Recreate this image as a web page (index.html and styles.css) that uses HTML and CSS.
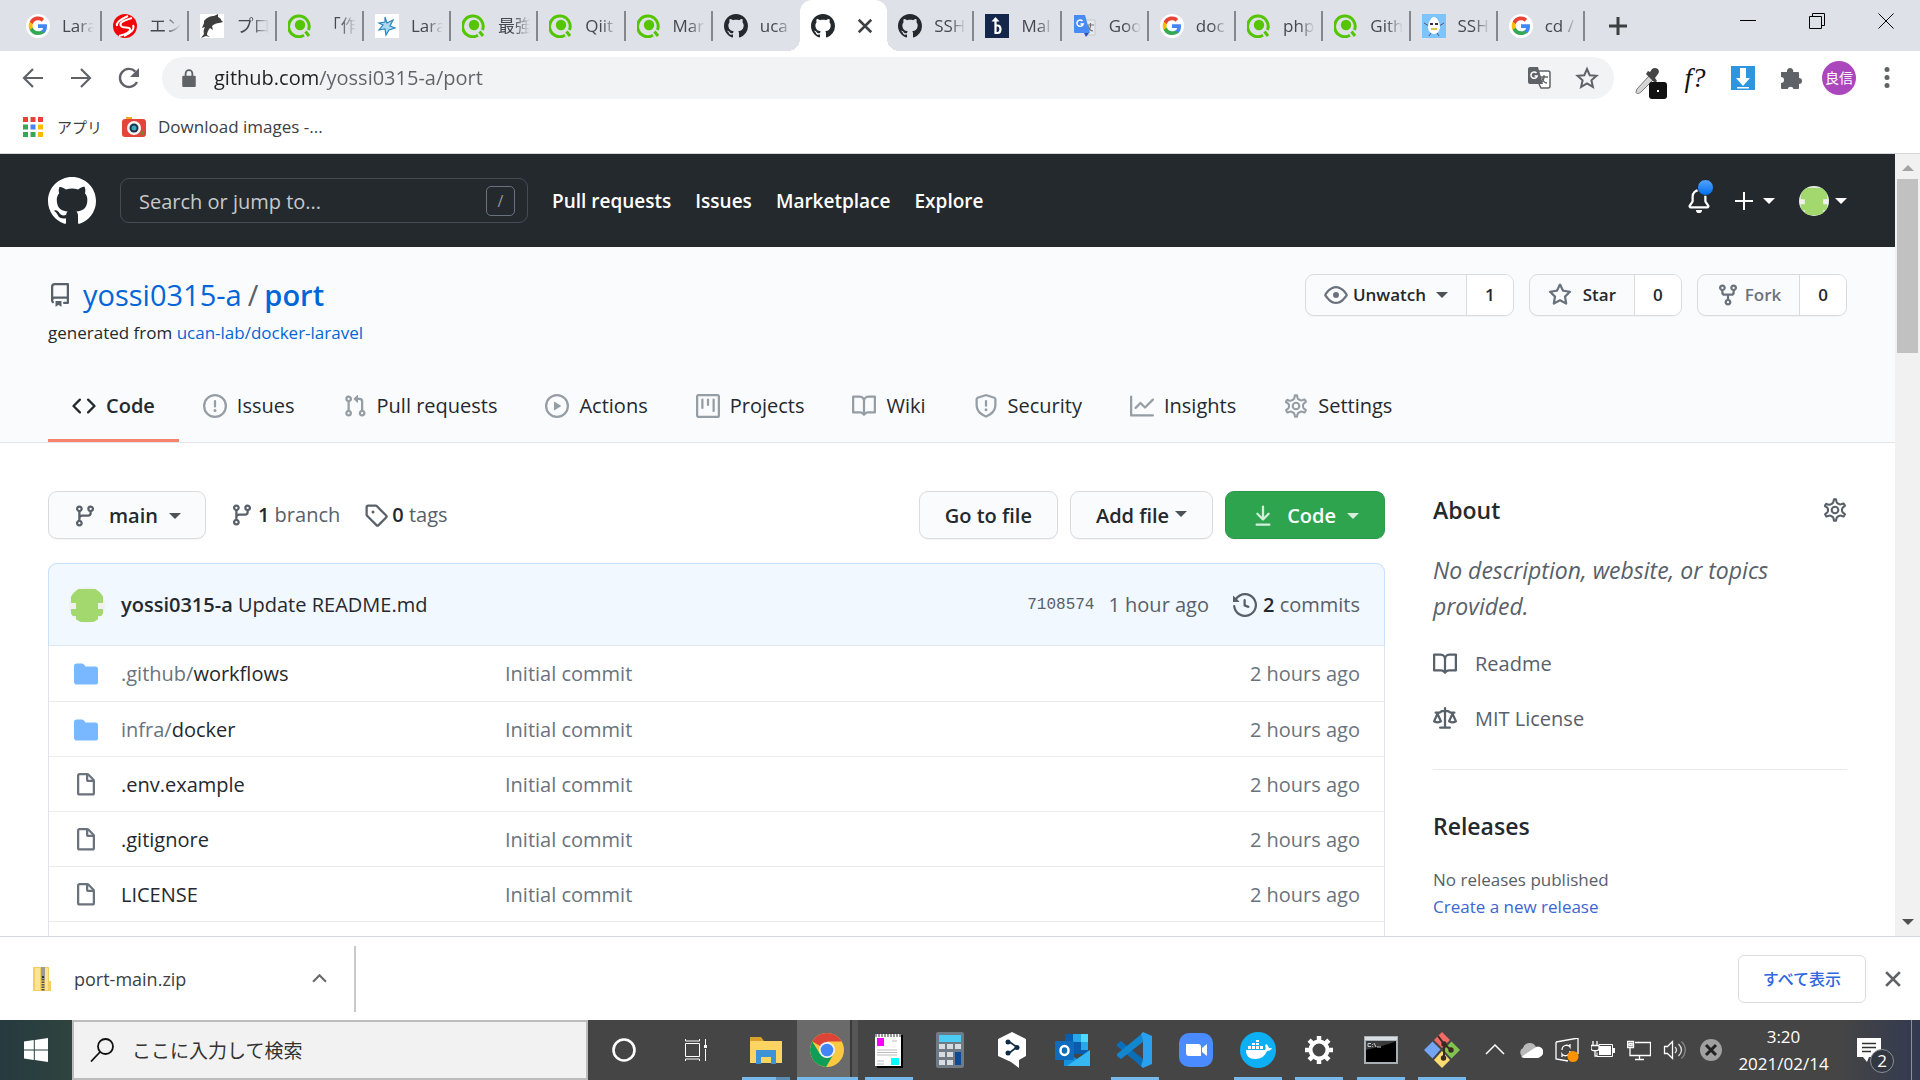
FILE: index.html
```html
<!DOCTYPE html>
<html lang="ja">
<head>
  <meta charset="UTF-8">
  <meta name="viewport" content="width=device-width, initial-scale=1">
  <title>yossi0315-a/port</title>
  <link rel="stylesheet" href="styles.css">
</head>
<body>

  <!-- ICON SPRITE -->
  <svg class="sprite" aria-hidden="true">
    <symbol id="mark" viewBox="0 0 16 16"><path d="M8 0C3.58 0 0 3.58 0 8c0 3.54 2.29 6.53 5.47 7.59.4.07.55-.17.55-.38 0-.19-.01-.82-.01-1.49-2.01.37-2.53-.49-2.69-.94-.09-.23-.48-.94-.82-1.13-.28-.15-.68-.52-.01-.53.63-.01 1.08.58 1.23.82.72 1.21 1.87.87 2.33.66.07-.52.28-.87.51-1.07-1.78-.2-3.64-.89-3.64-3.95 0-.87.31-1.59.82-2.15-.08-.2-.36-1.02.08-2.12 0 0 .67-.21 2.2.82.64-.18 1.32-.27 2-.27.68 0 1.36.09 2 .27 1.53-1.04 2.2-.82 2.2-.82.44 1.1.16 1.92.08 2.12.51.56.82 1.27.82 2.15 0 3.07-1.87 3.75-3.65 3.95.29.25.54.73.54 1.48 0 1.07-.01 1.93-.01 2.2 0 .21.15.46.55.38A8.013 8.013 0 0016 8c0-4.42-3.58-8-8-8z"/></symbol>
    <symbol id="repo" viewBox="0 0 16 16"><path d="M2 2.5A2.5 2.5 0 014.5 0h8.75a.75.75 0 01.75.75v12.5a.75.75 0 01-.75.75h-2.5a.75.75 0 110-1.5h1.75v-2h-8a1 1 0 00-.714 1.7.75.75 0 01-1.072 1.05A2.495 2.495 0 012 11.5v-9zm10.5-1V9h-8c-.356 0-.694.074-1 .208V2.5a1 1 0 011-1h8zM5 12.25v3.25a.25.25 0 00.4.2l1.45-1.087a.25.25 0 01.3 0L8.6 15.7a.25.25 0 00.4-.2v-3.25a.25.25 0 00-.25-.25h-3.5a.25.25 0 00-.25.25z"/></symbol>
    <symbol id="code" viewBox="0 0 16 16"><path d="M4.72 3.22a.75.75 0 011.06 1.06L2.06 8l3.72 3.72a.75.75 0 11-1.06 1.06L.47 8.53a.75.75 0 010-1.06l4.25-4.25zm6.56 0a.75.75 0 10-1.06 1.06L13.94 8l-3.72 3.72a.75.75 0 101.06 1.06l4.25-4.25a.75.75 0 000-1.06l-4.25-4.25z"/></symbol>
    <symbol id="issue" viewBox="0 0 16 16"><path d="M8 1.5a6.5 6.5 0 100 13 6.5 6.5 0 000-13zM0 8a8 8 0 1116 0A8 8 0 010 8zm9 3a1 1 0 11-2 0 1 1 0 012 0zm-.25-6.25a.75.75 0 00-1.5 0v3.5a.75.75 0 001.5 0v-3.5z"/></symbol>
    <symbol id="pull" viewBox="0 0 16 16"><path d="M7.177 3.073L9.573.677A.25.25 0 0110 .854v4.792a.25.25 0 01-.427.177L7.177 3.427a.25.25 0 010-.354zM3.75 2.5a.75.75 0 100 1.5.75.75 0 000-1.5zm-2.25.75a2.25 2.25 0 113 2.122v5.256a2.251 2.251 0 11-1.5 0V5.372A2.25 2.25 0 011.5 3.25zM11 2.5h-1V4h1a1 1 0 011 1v5.628a2.251 2.251 0 101.5 0V5A2.5 2.5 0 0011 2.5zm1 10.25a.75.75 0 111.5 0 .75.75 0 01-1.5 0zM3.75 12a.75.75 0 100 1.5.75.75 0 000-1.5z"/></symbol>
    <symbol id="play" viewBox="0 0 16 16"><path d="M1.5 8a6.5 6.5 0 1113 0 6.5 6.5 0 01-13 0zM8 0a8 8 0 100 16A8 8 0 008 0zM6.379 5.227A.25.25 0 006 5.442v5.117a.25.25 0 00.379.214l4.264-2.559a.25.25 0 000-.428L6.379 5.227z"/></symbol>
    <symbol id="project" viewBox="0 0 16 16"><path d="M1.75 0A1.75 1.75 0 000 1.75v12.5C0 15.216.784 16 1.75 16h12.5A1.75 1.75 0 0016 14.25V1.75A1.75 1.75 0 0014.25 0H1.75zM1.5 1.75a.25.25 0 01.25-.25h12.5a.25.25 0 01.25.25v12.5a.25.25 0 01-.25.25H1.75a.25.25 0 01-.25-.25V1.75zM11.75 3a.75.75 0 00-.75.75v7.5a.75.75 0 001.5 0v-7.5a.75.75 0 00-.75-.75zm-8.25.75a.75.75 0 011.5 0v5.5a.75.75 0 01-1.5 0v-5.5zM8 3a.75.75 0 00-.75.75v3.5a.75.75 0 001.5 0v-3.5A.75.75 0 008 3z"/></symbol>
    <symbol id="book" viewBox="0 0 16 16"><path d="M0 1.75A.75.75 0 01.75 1h4.253c1.227 0 2.317.59 3 1.501A3.744 3.744 0 0111.006 1h4.245a.75.75 0 01.75.75v10.5a.75.75 0 01-.75.75h-4.507a2.25 2.25 0 00-1.591.659l-.622.621a.75.75 0 01-1.06 0l-.622-.621A2.25 2.25 0 005.258 13H.75a.75.75 0 01-.75-.75V1.75zm8.755 3a2.25 2.25 0 012.25-2.25H14.5v9h-3.757c-.71 0-1.4.201-1.992.572l.004-7.322zm-1.504 7.324l.004-5.073-.002-2.253A2.25 2.25 0 005.003 2.5H1.5v9h3.757a3.75 3.75 0 011.994.574z"/></symbol>
    <symbol id="shield" viewBox="0 0 16 16"><path d="M7.467.133a1.75 1.75 0 011.066 0l5.25 1.68A1.75 1.75 0 0115 3.48V7c0 1.566-.32 3.182-1.303 4.682-.983 1.498-2.585 2.813-5.032 3.855a1.7 1.7 0 01-1.33 0c-2.447-1.042-4.049-2.357-5.032-3.855C1.32 10.182 1 8.566 1 7V3.48a1.75 1.75 0 011.217-1.667l5.25-1.68zm.61 1.429a.25.25 0 00-.153 0l-5.25 1.68a.25.25 0 00-.174.238V7c0 1.358.275 2.666 1.057 3.86.784 1.194 2.121 2.34 4.366 3.297a.2.2 0 00.154 0c2.245-.956 3.582-2.104 4.366-3.298C13.225 9.666 13.5 8.36 13.5 7V3.48a.25.25 0 00-.174-.237l-5.25-1.68zM9 10.5a1 1 0 11-2 0 1 1 0 012 0zm-.25-5.75a.75.75 0 10-1.5 0v3a.75.75 0 001.5 0v-3z"/></symbol>
    <symbol id="graph" viewBox="0 0 16 16"><path d="M1.5 1.75a.75.75 0 00-1.5 0v12.5c0 .414.336.75.75.75h14.5a.75.75 0 000-1.5H1.5V1.75zm14.28 2.53a.75.75 0 00-1.06-1.06L10 7.94 7.53 5.47a.75.75 0 00-1.06 0L3.22 8.72a.75.75 0 001.06 1.06L7 7.06l2.47 2.47a.75.75 0 001.06 0l5.25-5.25z"/></symbol>
    <symbol id="gear" viewBox="0 0 16 16"><g fill="none" stroke="currentColor" stroke-width="1.4"><path d="M7.429.925a6.593 6.593 0 011.142 0c.036.003.108.036.137.146l.289 1.405c.147.56.55.967.997 1.189.174.086.341.183.501.29.417.278.97.423 1.53.27l1.602-.503c.11-.03.175.016.195.046.219.31.61.941.773 1.289.014.031.022.11-.059.19l-1.315 1.106c-.411.406-.562.857-.53 1.256a4.588 4.588 0 010 .782c-.032.499.119.85.53 1.256l1.315 1.106c.08.08.073.159.059.19a6.494 6.494 0 01-.773 1.29c-.02.029-.086.074-.195.045l-1.603-.503c-.559-.153-1.112-.008-1.529.27-.16.107-.327.204-.5.29-.449.222-.851.628-.998 1.189l-.289 1.405c-.029.11-.101.143-.137.146a6.613 6.613 0 01-1.142 0c-.036-.003-.108-.037-.137-.146l-.289-1.405c-.147-.56-.55-.967-.997-1.189a4.502 4.502 0 01-.501-.29c-.417-.278-.97-.423-1.53-.27l-1.602.503c-.11.03-.175-.016-.195-.046a6.492 6.492 0 01-.773-1.289c-.014-.031-.022-.11.059-.19l1.315-1.106c.411-.406.562-.857.53-1.256a4.587 4.587 0 010-.782c.032-.499-.119-.85-.53-1.256L1.365 5.448c-.08-.08-.073-.159-.059-.19a6.44 6.44 0 01.773-1.290c.02-.029.086-.074.195-.045l1.603.503c.559.153 1.112.008 1.529-.27.16-.107.327-.204.5-.29.449-.222.851-.628.998-1.189l.388-1.606c.029-.11.101-.143.137-.146z"/><circle cx="8" cy="8" r="2.2"/></g></symbol>
    <symbol id="eye" viewBox="0 0 16 16"><path d="M1.679 7.932c.412-.621 1.242-1.75 2.366-2.717C5.175 4.242 6.527 3.5 8 3.5c1.473 0 2.824.742 3.955 1.715 1.124.967 1.954 2.096 2.366 2.717a.119.119 0 010 .136c-.412.621-1.242 1.75-2.366 2.717C10.825 11.758 9.473 12.5 8 12.5c-1.473 0-2.824-.742-3.955-1.715C2.92 9.818 2.09 8.69 1.679 8.068a.119.119 0 010-.136zM8 2c-1.981 0-3.67.992-4.933 2.078C1.797 5.169.88 6.423.43 7.1a1.619 1.619 0 000 1.798c.45.678 1.367 1.932 2.637 3.024C4.329 13.008 6.019 14 8 14c1.981 0 3.67-.992 4.933-2.078 1.27-1.091 2.187-2.345 2.637-3.023a1.619 1.619 0 000-1.798c-.45-.678-1.367-1.932-2.637-3.023C11.671 2.992 9.981 2 8 2zm0 8a2 2 0 100-4 2 2 0 000 4z"/></symbol>
    <symbol id="star" viewBox="0 0 16 16"><path d="M8 .25a.75.75 0 01.673.418l1.882 3.815 4.21.612a.75.75 0 01.416 1.279l-3.046 2.97.719 4.192a.75.75 0 01-1.088.791L8 12.347l-3.766 1.98a.75.75 0 01-1.088-.79l.72-4.194L.818 6.374a.75.75 0 01.416-1.28l4.21-.611L7.327.668A.75.75 0 018 .25zm0 2.445L6.615 5.5a.75.75 0 01-.564.41l-3.097.45 2.24 2.184a.75.75 0 01.216.664l-.528 3.084 2.769-1.456a.75.75 0 01.698 0l2.77 1.456-.53-3.084a.75.75 0 01.216-.664l2.24-2.183-3.096-.45a.75.75 0 01-.564-.41L8 2.694v.001z"/></symbol>
    <symbol id="fork" viewBox="0 0 16 16"><path d="M5 3.25a.75.75 0 11-1.5 0 .75.75 0 011.5 0zm0 2.122a2.25 2.25 0 10-1.5 0v.878A2.25 2.25 0 005.75 8.5h1.5v2.128a2.251 2.251 0 101.5 0V8.5h1.5a2.25 2.25 0 002.25-2.25v-.878a2.25 2.25 0 10-1.5 0v.878a.75.75 0 01-.75.75h-4.5A.75.75 0 015 6.25v-.878zm3.75 7.378a.75.75 0 11-1.5 0 .75.75 0 011.5 0zm3-8.75a.75.75 0 100-1.5.75.75 0 000 1.5z"/></symbol>
    <symbol id="branch" viewBox="0 0 16 16"><path d="M11.75 2.5a.75.75 0 100 1.5.75.75 0 000-1.5zm-2.25.75a2.25 2.25 0 113 2.122V6A2.5 2.5 0 0110 8.5H6a1 1 0 00-1 1v1.128a2.251 2.251 0 11-1.5 0V5.372a2.25 2.25 0 111.5 0v1.836A2.492 2.492 0 016 7h4a1 1 0 001-1v-.628A2.25 2.25 0 019.5 3.25zM4.25 12a.75.75 0 100 1.5.75.75 0 000-1.5zM3.5 3.25a.75.75 0 111.5 0 .75.75 0 01-1.5 0z"/></symbol>
    <symbol id="tag" viewBox="0 0 16 16"><path d="M2.5 7.775V2.75a.25.25 0 01.25-.25h5.025a.25.25 0 01.177.073l6.25 6.25a.25.25 0 010 .354l-5.025 5.025a.25.25 0 01-.354 0l-6.25-6.25a.25.25 0 01-.073-.177zm-1.5 0V2.75C1 1.784 1.784 1 2.75 1h5.025c.464 0 .91.184 1.238.513l6.25 6.25a1.75 1.75 0 010 2.474l-5.026 5.026a1.75 1.75 0 01-2.474 0l-6.25-6.25A1.75 1.75 0 011 7.775zM6 5a1 1 0 100 2 1 1 0 000-2z"/></symbol>
    <symbol id="history" viewBox="0 0 16 16"><path d="M1.643 3.143L.427 1.927A.25.25 0 000 2.104V5.75c0 .138.112.25.25.25h3.646a.25.25 0 00.177-.427L2.715 4.215a6.5 6.5 0 11-1.18 4.458.75.75 0 10-1.493.154 8.001 8.001 0 101.6-5.684zM7.75 4a.75.75 0 01.75.75v2.992l2.028.812a.75.75 0 01-.557 1.392l-2.5-1A.75.75 0 017 8.25v-3.5A.75.75 0 017.75 4z"/></symbol>
    <symbol id="file" viewBox="0 0 16 16"><path d="M3.75 1.5a.25.25 0 00-.25.25v11.5c0 .138.112.25.25.25h8.5a.25.25 0 00.25-.25V6H9.75A1.75 1.75 0 018 4.25V1.5H3.75zm5.75.56v2.19c0 .138.112.25.25.25h2.19L9.5 2.06zM2 1.75C2 .784 2.784 0 3.75 0h5.086c.464 0 .909.184 1.237.513l3.414 3.414c.329.328.513.773.513 1.237v8.086A1.75 1.75 0 0112.25 15h-8.5A1.75 1.75 0 012 13.25V1.75z"/></symbol>
    <symbol id="folder" viewBox="0 0 16 16"><path d="M1.75 1A1.75 1.75 0 000 2.75v10.5C0 14.216.784 15 1.75 15h12.5A1.75 1.75 0 0016 13.25v-8.5A1.75 1.75 0 0014.25 3h-6.5a.25.25 0 01-.2-.1l-.9-1.2c-.33-.44-.85-.7-1.4-.7h-3.5z"/></symbol>
    <symbol id="download" viewBox="0 0 16 16"><path d="M7.47 10.78a.75.75 0 001.06 0l3.75-3.75a.75.75 0 00-1.06-1.06L8.75 8.44V1.75a.75.75 0 00-1.5 0v6.69L4.78 5.97a.75.75 0 00-1.06 1.06l3.75 3.75zM3.75 13a.75.75 0 000 1.5h8.5a.75.75 0 000-1.5h-8.5z"/></symbol>
    <symbol id="law" viewBox="0 0 16 16"><path d="M8.75.75a.75.75 0 00-1.5 0V2h-.984c-.305 0-.604.08-.869.23l-1.288.737A.25.25 0 013.984 3H1.75a.75.75 0 000 1.5h.428L.066 9.192a.75.75 0 00.154.838c.2.2.5.37.754.512A4.492 4.492 0 003 11c.88 0 1.556-.22 2.023-.454.3-.15.55-.3.757-.516a.75.75 0 00.154-.838L3.822 4.5h.162c.305 0 .604-.08.869-.23l1.289-.737a.25.25 0 01.124-.033h.984V13h-2.5a.75.75 0 000 1.5h6.5a.75.75 0 000-1.5h-2.5V3.5h.984a.25.25 0 01.124.033l1.29.736c.264.152.563.231.868.231h.162l-2.112 4.692a.75.75 0 00.154.838c.2.2.5.37.754.512A4.492 4.492 0 0013 11c.88 0 1.556-.22 2.023-.454.3-.15.55-.3.757-.516a.75.75 0 00.154-.838L13.823 4.5h.427a.75.75 0 000-1.5h-2.234a.25.25 0 01-.124-.033l-1.29-.736A1.75 1.75 0 009.735 2H8.75V.75zM1.695 9.227c.285.135.718.273 1.305.273s1.02-.138 1.305-.273L3 6.327l-1.305 2.9zm10 0c.285.135.718.273 1.305.273s1.02-.138 1.305-.273L13 6.327l-1.305 2.9z"/></symbol>
    <symbol id="bell" viewBox="0 0 16 16"><path d="M8 16a2 2 0 001.985-1.75c.017-.137-.097-.25-.235-.25h-3.5c-.138 0-.252.113-.235.25A2 2 0 008 16zM8 1.5A3.5 3.5 0 004.5 5v2.947c0 .346-.102.683-.294.97L2.5 11.48l.02.02h10.96l.02-.02-1.706-2.563a1.75 1.75 0 01-.294-.97V5A3.5 3.5 0 008 1.5zM3 5a5 5 0 0110 0v2.947c0 .05.015.098.042.139l1.703 2.555A1.518 1.518 0 0113.482 13H2.518a1.518 1.518 0 01-1.263-2.36l1.703-2.554A.25.25 0 003 7.947V5z"/></symbol>
    <symbol id="close" viewBox="0 0 16 16"><path d="M3 3l10 10M13 3L3 13" fill="none" stroke="currentColor" stroke-width="2"/></symbol>
    <symbol id="identicon" viewBox="0 0 36 36"><path fill="#f0f0f0" d="M0 0h36v36H0z"/><path fill="#a3d86f" d="M2 2h32v14h-5v6h5v7h-5v6H7v-6H2v-7h5v-6H2z"/></symbol>

    <!-- favicons -->
    <symbol id="fav-google" viewBox="0 0 24 24"><circle cx="12" cy="12" r="12" fill="#fff"/><path fill="#4285f4" d="M21 12.200c0-.700-.100-1.300-.200-1.900H12v3.600h5.100a4.400 4.400 0 01-1.900 2.900v2.400h3.100c1.800-1.700 2.700-4.100 2.700-7z"/><path fill="#34a853" d="M12 21c2.500 0 4.600-.8 6.200-2.200l-3-2.400c-.8.6-1.900.9-3.200.9-2.400 0-4.500-1.600-5.200-3.800H3.700v2.400A9 9 0 0012 21z"/><path fill="#fbbc05" d="M6.800 13.500a5.400 5.400 0 010-3.400V7.700H3.700a9.300 9.300 0 000 8.200z"/><path fill="#ea4335" d="M12 6.300c1.400 0 2.600.5 3.500 1.400L18.200 5A9 9 0 003.700 7.700l3.100 2.400A5.400 5.400 0 0112 6.300z"/></symbol>
    <symbol id="fav-qiita" viewBox="0 0 24 24"><path d="M20.500 16A10.300 10.300 0 1 0 16 21.300M17.500 17.500L21 22" fill="none" stroke="#55c500" stroke-width="3"/><circle cx="12" cy="11" r="5.200" fill="#55c500"/></symbol>
    <symbol id="fav-red" viewBox="0 0 24 24"><circle cx="12" cy="12" r="12" fill="#f00606"/><path d="M19 4C9 7 6 9 8 12s8 0 9 3-4 5-11 7M15 2C6 6 3 9 4 12M20 11c2 4-2 8-9 11" fill="none" stroke="#fff" stroke-width="2"/></symbol>
    <symbol id="fav-dolphin" viewBox="0 0 24 24"><path fill="#fff" d="M0 0h24v24H0z"/><path fill="#3d3d3d" d="M4 7C7 3 11 2 14 2l4-2v3c2 1 3 2 3 3l2 2-4 1c-2 0-5 1-7 3l1 4-3-2c-2 2-3 5-3 7l3 2-4-1-5 2 3-4c-1-3 0-5 1-7l-3 1 2-5z"/></symbol>
    <symbol id="fav-blue" viewBox="0 0 24 24"><path fill="#fff" d="M0 0h24v24H0z"/><path d="M10 3l2 6 6-3-3 6 5 2-6 2-3 5-1-6-6 1 4-5-4-2 6-1z" fill="#a9d8f0" stroke="#2b86bb" stroke-width="1.200"/></symbol>
    <symbol id="fav-b" viewBox="0 0 24 24"><path fill="#15264b" d="M0 0h24v24H0z"/><path d="M10.500 5v14h2c4 0 4-7.500 0-7.500h-2" fill="none" stroke="#fff" stroke-width="2.200"/><path fill="#fff" d="M10.500 3l4 4.500h-8z"/></symbol>
    <symbol id="fav-egg" viewBox="0 0 24 24"><path fill="#7cc4fb" d="M0 0h24v24H0z"/><path d="M7 12L2 9M17 12l5-3M9 19l-2 3M15 19l2 3" stroke="#557" fill="none"/><path fill="#fff" d="M12 3c3 0 6 6 6 10s-3 7-6 7-6-3-6-7 3-10 6-10z"/><path fill="#334" d="M8 9h3v2H8zM13 9h3v2h-3z"/><path fill="#d9c94a" d="M9 14h6v2H9z"/></symbol>
    <symbol id="fav-trans" viewBox="0 0 24 24"><path fill="#e8eaed" stroke="#c6c9cd" d="M10 6h12v15H13z"/><path d="M14 11h7M17.500 9v2c0 3-1 5-3 6M15 12c1 3 3 5 5 5" stroke="#70757a" stroke-width="1.200" fill="none"/><path fill="#4a8cf5" d="M1 1h11l5 18H2a1 1 0 01-1-1z"/><path fill="#2b50b8" d="M11 19h5l-3 4z"/><path d="M9.500 7A3.200 3.200 0 1 0 10.200 10H7.500" fill="none" stroke="#fff" stroke-width="1.500"/></symbol>
  </svg>

  <!-- BROWSER TABS -->
  <div class="tab-strip">
    <div class="tabs">
      <button class="tab"><svg><use href="#fav-google"/></svg><span>Lara</span></button>
      <button class="tab"><svg><use href="#fav-red"/></svg><span>エン</span></button>
      <button class="tab"><svg><use href="#fav-dolphin"/></svg><span>プロ</span></button>
      <button class="tab"><svg><use href="#fav-qiita"/></svg><span>「作</span></button>
      <button class="tab"><svg><use href="#fav-blue"/></svg><span>Lara</span></button>
      <button class="tab"><svg><use href="#fav-qiita"/></svg><span>最強</span></button>
      <button class="tab"><svg><use href="#fav-qiita"/></svg><span>Qiit</span></button>
      <button class="tab"><svg><use href="#fav-qiita"/></svg><span>Mar</span></button>
      <button class="tab no-line"><svg class="dark"><use href="#mark"/></svg><span>uca</span></button>
      <button class="tab active"><svg class="dark"><use href="#mark"/></svg><svg class="tab-close"><use href="#close"/></svg></button>
      <button class="tab"><svg class="dark"><use href="#mark"/></svg><span>SSH</span></button>
      <button class="tab"><svg><use href="#fav-b"/></svg><span>Mal</span></button>
      <button class="tab"><svg><use href="#fav-trans"/></svg><span>Goo</span></button>
      <button class="tab"><svg><use href="#fav-google"/></svg><span>doc</span></button>
      <button class="tab"><svg><use href="#fav-qiita"/></svg><span>php</span></button>
      <button class="tab"><svg><use href="#fav-qiita"/></svg><span>Gith</span></button>
      <button class="tab"><svg><use href="#fav-egg"/></svg><span>SSH</span></button>
      <button class="tab"><svg><use href="#fav-google"/></svg><span>cd /</span></button>
    </div>
    <button class="new-tab" aria-label="New tab"><svg viewBox="0 0 18 18"><path d="M9 0v18M0 9h18" stroke="#3c4043" stroke-width="3"/></svg></button>
    <div class="window-buttons">
      <button aria-label="Minimize"><svg viewBox="0 0 16 16"><path d="M0 7.500h16" stroke="#000"/></svg></button>
      <button aria-label="Restore"><svg viewBox="0 0 16 16"><path d="M.5 3.500h12v12H.5zM3.500 3.500v-3h12v12h-3" fill="none" stroke="#000"/></svg></button>
      <button aria-label="Close"><svg viewBox="0 0 16 16"><path d="M.5.5l15 15M15.500.5l-15 15" stroke="#000"/></svg></button>
    </div>
  </div>

  <!-- ADDRESS BAR -->
  <div class="toolbar">
    <button class="tool" aria-label="Back"><svg viewBox="0 0 24 24"><path d="M22 12H3M12 3l-9 9 9 9" fill="none" stroke="#5f6368" stroke-width="2.200"/></svg></button>
    <button class="tool" aria-label="Forward"><svg viewBox="0 0 24 24"><path d="M2 12h19M12 3l9 9-9 9" fill="none" stroke="#5f6368" stroke-width="2.200"/></svg></button>
    <button class="tool" aria-label="Reload"><svg viewBox="0 0 24 24"><path d="M20 16a9 9 0 11-1.600-10.400" fill="none" stroke="#5f6368" stroke-width="2.400"/><path d="M22 2v9h-9z" fill="#5f6368"/></svg></button>
    <div class="omnibox">
      <svg class="lock" viewBox="0 0 12 16"><path d="M1 6h10a1 1 0 011 1v8a1 1 0 01-1 1H1a1 1 0 01-1-1V7a1 1 0 011-1z" fill="#5f6368"/><path d="M3 7V4a3 3 0 016 0v3" fill="none" stroke="#5f6368" stroke-width="1.600"/></svg>
      <input class="url" type="text" value="github.com/yossi0315-a/port" aria-label="Address">
      <button aria-label="Translate"><svg viewBox="0 0 24 24"><path d="M12 5h9a2 2 0 012 2v13a2 2 0 01-2 2h-7l-2-4" fill="#fff" stroke="#5f6368" stroke-width="1.500"/><path d="M13 11h8M17 9v2c0 3-2 5-4 6M15 12c1 3 3 5 5 5" fill="none" stroke="#5f6368" stroke-width="1.300"/><path d="M3 1h8l5 17H3a2 2 0 01-2-2V3a2 2 0 012-2z" fill="#5f6368"/><path d="M9.500 7A3.200 3.200 0 1 0 10.200 10H7.500" fill="none" stroke="#fff" stroke-width="1.500"/></svg></button>
      <button aria-label="Bookmark"><svg viewBox="0 0 24 24"><path d="M12 3l2.700 6.200 6.800.6-5.100 4.500 1.500 6.600-5.900-3.500-5.900 3.500 1.500-6.600-5.100-4.500 6.800-.6z" fill="none" stroke="#5f6368" stroke-width="2"/></svg></button>
    </div>
    <div class="extensions">
      <button class="picker" aria-label="Color picker"><svg viewBox="0 0 32 34"><path d="M2 24l12-13 4 4L6 27c-2 2-5 2-5 0z" fill="#d5d5d5" stroke="#777"/><path d="M11 9l9 9 2-2-2-3 3-4c3-4-2-8-6-5l-2 3-2-1z" fill="#444"/><rect x="14" y="17" width="18" height="17" rx="3" fill="#111"/><path fill="#fff" d="M22 25h2v2h-2z"/></svg></button>
      <button class="font-ext" aria-label="Fonts"><i>f?</i></button>
      <button aria-label="Downloader"><svg viewBox="0 0 24 24"><path fill="#2e95df" d="M0 0h24v24H0z"/><path fill="#fff" d="M9 2h6v10h4l-7 8-7-8h4zM6 21h12v1.500H6z"/></svg></button>
      <button aria-label="Extensions"><svg viewBox="0 0 24 24"><path fill="#5f6368" d="M2 6h6a3.200 3.200 0 116.200 0H19a1 1 0 011 1v5a3 3 0 110 6v4a1 1 0 01-1 1h-4.500a3 3 0 00-5.800 0H3a1 1 0 01-1-1v-5a3 3 0 000-6z"/></svg></button>
      <button class="profile">良信</button>
      <button aria-label="Menu"><svg viewBox="0 0 24 24"><g fill="#5f6368"><circle cx="12" cy="3.500" r="2.500"/><circle cx="12" cy="11.500" r="2.500"/><circle cx="12" cy="19.500" r="2.500"/></g></svg></button>
    </div>
  </div>

  <!-- BOOKMARKS -->
  <nav class="bookmarks">
    <a href="#" class="apps-link"><svg viewBox="0 0 20 20"><g fill="#ea4335"><path d="M0 0h5v5H0zM7.500 0h5v5h-5zM15 0h5v5h-5z"/></g><path fill="#34a853" d="M0 7.500h5v5H0zM0 15h5v5H0zM7.500 15h5v5h-5z"/><path fill="#4285f4" d="M7.500 7.500h5v5h-5z"/><path fill="#fbbc05" d="M15 7.500h5v5h-5zM15 15h5v5h-5z"/></svg>アプリ</a>
    <a href="#"><svg class="camera" viewBox="0 0 24 20"><rect x="4" width="6" height="5" fill="#f5a623"/><rect y="2" width="24" height="18" rx="3" fill="#e4443c"/><circle cx="12" cy="11" r="7" fill="#f5f5f5"/><circle cx="12" cy="11" r="4.500" fill="#1c3444"/><circle cx="12" cy="11" r="2.500" fill="#3ba7c4"/><circle cx="20.500" cy="16" r="2" fill="#6a8a2c"/></svg>Download images -...</a>
  </nav>

  <!-- PAGE -->
  <div class="viewport">
    <div class="page">
      <header class="gh-header">
        <a href="#" aria-label="Homepage"><svg class="gh-logo"><use href="#mark"/></svg></a>
        <div class="gh-search">
          <input type="text" placeholder="Search or jump to..." aria-label="Search or jump to">
          <kbd>/</kbd>
        </div>
        <nav>
          <a href="#">Pull requests</a>
          <a href="#">Issues</a>
          <a href="#">Marketplace</a>
          <a href="#">Explore</a>
        </nav>
        <div class="gh-user">
          <button class="notify" aria-label="Notifications"><svg class="icon"><use href="#bell"/></svg><span class="dot"></span></button>
          <button aria-label="Create new"><svg class="plus" viewBox="0 0 18 18"><path d="M9 0v18M0 9h18" stroke="#fff" stroke-width="2"/></svg><span class="caret"></span></button>
          <button aria-label="Account"><svg class="avatar"><use href="#identicon"/></svg><span class="caret"></span></button>
        </div>
      </header>

      <div class="repo-head">
        <div class="repo-top">
          <div>
            <h1><svg class="icon"><use href="#repo"/></svg><a href="#">yossi0315-a</a><span>/</span><a href="#"><strong>port</strong></a></h1>
            <p>generated from <a href="#">ucan-lab/docker-laravel</a></p>
          </div>
          <div class="repo-actions">
            <div class="count-btn"><button><svg class="icon"><use href="#eye"/></svg>Unwatch<span class="caret"></span></button><a href="#">1</a></div>
            <div class="count-btn"><button class="spaced"><svg class="icon"><use href="#star"/></svg>Star</button><a href="#">0</a></div>
            <div class="count-btn"><button class="muted" disabled><svg class="icon"><use href="#fork"/></svg>Fork</button><a href="#">0</a></div>
          </div>
        </div>
        <nav class="repo-nav">
          <a href="#" class="selected"><svg class="icon"><use href="#code"/></svg>Code</a>
          <a href="#"><svg class="icon"><use href="#issue"/></svg>Issues</a>
          <a href="#"><svg class="icon"><use href="#pull"/></svg>Pull requests</a>
          <a href="#"><svg class="icon"><use href="#play"/></svg>Actions</a>
          <a href="#"><svg class="icon"><use href="#project"/></svg>Projects</a>
          <a href="#"><svg class="icon"><use href="#book"/></svg>Wiki</a>
          <a href="#"><svg class="icon"><use href="#shield"/></svg>Security</a>
          <a href="#"><svg class="icon"><use href="#graph"/></svg>Insights</a>
          <a href="#"><svg class="icon"><use href="#gear"/></svg>Settings</a>
        </nav>
      </div>

      <main class="repo-body">
        <section>
          <div class="file-nav">
            <button class="btn branch-btn"><svg class="icon"><use href="#branch"/></svg>main<span class="caret"></span></button>
            <a href="#"><svg class="icon"><use href="#branch"/></svg><span><strong>1</strong> branch</span></a>
            <a href="#"><svg class="icon"><use href="#tag"/></svg><span><strong>0</strong> tags</span></a>
            <div class="file-buttons">
              <button class="btn">Go to file</button>
              <button class="btn">Add file<span class="caret raised"></span></button>
              <button class="btn primary"><svg class="icon"><use href="#download"/></svg>Code<span class="caret"></span></button>
            </div>
          </div>

          <div class="files">
            <div class="last-commit">
              <svg class="commit-avatar"><use href="#identicon"/></svg>
              <p><a href="#"><strong>yossi0315-a</strong></a> <a href="#">Update README.md</a></p>
              <a href="#" class="sha">7108574</a>
              <span class="when">1 hour ago</span>
              <a href="#" class="commits"><svg class="icon"><use href="#history"/></svg><span><strong>2</strong> commits</span></a>
            </div>
            <table>
              <colgroup><col class="c-icon"><col class="c-name"><col><col class="c-age"></colgroup>
              <tr><td><svg class="icon folder"><use href="#folder"/></svg></td><td><a href="#"><span>.github/</span>workflows</a></td><td>Initial commit</td><td>2 hours ago</td></tr>
              <tr><td><svg class="icon folder"><use href="#folder"/></svg></td><td><a href="#"><span>infra/</span>docker</a></td><td>Initial commit</td><td>2 hours ago</td></tr>
              <tr><td><svg class="icon"><use href="#file"/></svg></td><td><a href="#">.env.example</a></td><td>Initial commit</td><td>2 hours ago</td></tr>
              <tr><td><svg class="icon"><use href="#file"/></svg></td><td><a href="#">.gitignore</a></td><td>Initial commit</td><td>2 hours ago</td></tr>
              <tr><td><svg class="icon"><use href="#file"/></svg></td><td><a href="#">LICENSE</a></td><td>Initial commit</td><td>2 hours ago</td></tr>
              <tr><td></td><td></td><td></td><td></td></tr>
            </table>
          </div>
        </section>

        <aside>
          <div class="about">
            <div class="about-head"><h2>About</h2><button aria-label="Edit"><svg class="icon"><use href="#gear"/></svg></button></div>
            <p><em>No description, website, or topics provided.</em></p>
            <a href="#"><svg class="icon"><use href="#book"/></svg>Readme</a>
            <a href="#"><svg class="icon"><use href="#law"/></svg>MIT License</a>
          </div>
          <div class="releases">
            <h2>Releases</h2>
            <p>No releases published</p>
            <a href="#">Create a new release</a>
          </div>
        </aside>
      </main>
    </div>
    <div class="scrollbar"><span class="up"></span><span class="thumb"></span><span class="down"></span></div>
  </div>

  <!-- DOWNLOAD SHELF -->
  <div class="shelf">
    <button class="download-item">
      <svg class="zip" viewBox="0 0 18 24"><path fill="#f3cf62" d="M0 0h16v14h2v10H0z"/><path fill="#fbe49a" d="M2 1h5v22H2zM12 1h3v22h-3z"/><path fill="#9a9a9a" d="M8 0h4v12H8z"/><path d="M10 12v12" stroke="#555" stroke-width="3" stroke-dasharray="1.500 1"/><path fill="#333" d="M9 9h2v2H9z"/></svg>
      <span>port-main.zip</span>
      <svg class="chev" viewBox="0 0 14 8"><path d="M1 7l6-6 6 6" fill="none" stroke="#6a6a6a" stroke-width="2"/></svg>
    </button>
    <button class="show-all">すべて表示</button>
    <button class="shelf-close" aria-label="Close"><svg><use href="#close"/></svg></button>
  </div>

  <!-- TASKBAR -->
  <div class="taskbar">
    <button class="start" aria-label="Start"><svg viewBox="0 0 24 24"><path fill="#fff" d="M0 3.400L9.800 2v9.500H0zM10.800 1.900L24 0v11.500H10.800zM0 12.500h9.800V22L0 20.600zM10.800 12.500H24V24l-13.200-1.900z"/></svg></button>
    <label class="task-search">
      <svg viewBox="0 0 24 24"><circle cx="15.500" cy="8.500" r="7.500" fill="none" stroke="#111" stroke-width="1.800"/><path d="M10 14L1 23.500" stroke="#111" stroke-width="1.800"/></svg>
      <input type="text" placeholder="ここに入力して検索">
    </label>
    <button class="task-btn" aria-label="Cortana"><svg viewBox="0 0 24 24"><circle cx="12" cy="12" r="10.500" fill="none" stroke="#fff" stroke-width="2.600"/></svg></button>
    <button class="task-btn" aria-label="Task view"><svg viewBox="0 0 24 24"><path d="M1.500 5.500h14v13h-14zM1.500 1v2h14V1M1.500 23v-2h14v2M21.500 1v6M21.500 11v12" fill="none" stroke="#fff"/><path fill="#fff" d="M20 7h3v3h-3z"/></svg></button>
    <div class="apps">
      <button class="running split" aria-label="Explorer"><svg viewBox="0 0 36 36"><path fill="#dba22b" d="M2 5h11l3 4H2z"/><path fill="#fcd462" d="M2 9h32v22H2z"/><path fill="#3e92d6" d="M8 18h20v14h-5v-7H13v7H8z"/></svg></button>
      <button class="current" aria-label="Chrome"><svg viewBox="0 0 36 36"><circle cx="18" cy="18" r="17" fill="#fbc940"/><path fill="#db4437" d="M18 18L3.300 9.500A17 17 0 0132.700 9.500H18z"/><path fill="#0f9d58" d="M3.300 9.500A17 17 0 0017 35l8-13.500L18 18l-7 4z"/><circle cx="18" cy="18" r="8" fill="#f1f1f1"/><circle cx="18" cy="18" r="6.300" fill="#4285f4"/></svg></button>
      <button class="running" aria-label="Notes"><svg viewBox="0 0 36 36"><path fill="#000" d="M6 3h26v33H6z"/><path fill="#fff" d="M4 2h26v32H4z"/><path d="M5 1v4M8 1v4M11 1v4M14 1v4M17 1v4M20 1v4M23 1v4M26 1v4M29 1v4" stroke="#333"/><path fill="#f0f" d="M6 6h7v8H6z"/><path fill="#0ff" d="M20 26h8v7h-8z"/><path d="M6 18h20M6 20.500h20M6 23h20M6 29h7M6 32h7M21 9h5" stroke="#bbb"/></svg></button>
      <button aria-label="Calculator"><svg viewBox="0 0 36 36"><rect x="4" y="0" width="28" height="36" rx="2" fill="#6f7a85"/><path fill="#4ccbf5" d="M7 3h22v7H7z"/><path fill="#d8dce0" d="M7 12h6v5H7zM15 12h6v5h-6zM23 12h6v5h-6zM7 20h6v5H7zM15 20h6v5h-6zM7 28h6v5H7zM15 28h6v5h-6z"/><path fill="#0f4a96" d="M23 20h6v13h-6z"/></svg></button>
      <button aria-label="DeepL"><svg viewBox="0 0 36 36"><path fill="#fff" d="M18 0l14 7v17l-7 4v8l-8-6L4 24V7z"/><path d="M14 9l9 6-9 7" fill="none" stroke="#0f2b46" stroke-width="1.600"/><g fill="#0f2b46"><circle cx="14" cy="10" r="2.500"/><circle cx="23" cy="15.500" r="2.500"/><circle cx="14" cy="21" r="2.500"/></g></svg></button>
      <button aria-label="Outlook"><svg viewBox="0 0 36 36"><path fill="#0a5cad" d="M10 2h23v20H10z"/><path fill="#28a8ea" d="M18 2h8v8h-8zM26 10h7v8h-7z"/><path fill="#50d9ff" d="M26 2h7v8h-7z"/><path fill="#1490df" d="M9 18l13 9 13-9v16H9z"/><path fill="#35b8f1" d="M35 18L12 34h23z"/><rect y="9" width="19" height="19" rx="1" fill="#0f6cbd"/><ellipse cx="9.500" cy="18.500" rx="4" ry="4.500" fill="none" stroke="#fff" stroke-width="2.500"/></svg></button>
      <button class="running" aria-label="Editor"><svg viewBox="0 0 36 36"><path fill="#0a6fb8" d="M0 12l4-3 22 18v9L0 14z"/><path fill="#1386d0" d="M0 24l4 3L27 9V0L0 22z"/><path fill="#2aa0ee" d="M26 0l9 4v28l-9 4-2-2 2-6V8l-2-6z"/></svg></button>
      <button aria-label="Zoom"><svg viewBox="0 0 36 36"><rect x="1" y="1" width="34" height="34" rx="10" fill="#4a8cff"/><path fill="#fff" d="M8 12h12a3 3 0 013 3v9H11a3 3 0 01-3-3zM24 16l5-4v12l-5-4z"/></svg></button>
      <button class="running" aria-label="Docker"><svg viewBox="0 0 36 36"><circle cx="18" cy="18" r="18" fill="#0db0f5"/><path fill="#fff" d="M6 18h19c1-2 1-3 0-4l1-2c2 1 2 2 3 4h3c-1 2-2 3-5 3-2 5-6 8-12 8-6 0-9-3-9-9z"/><path fill="#fff" d="M8 14h3v3H8zM12 14h3v3h-3zM16 14h3v3h-3zM20 14h3v3h-3zM12 11h3v2h-3zM16 11h3v2h-3zM16 8h3v2h-3z"/></svg></button>
      <button class="running" aria-label="Settings"><svg viewBox="0 0 36 36"><circle cx="18" cy="18" r="8.500" fill="none" stroke="#fff" stroke-width="4"/><path d="M18 4v5M18 27v5M4 18h5M27 18h5M8.100 8.100l3.600 3.600M24.300 24.300l3.600 3.600M8.100 27.900l3.600-3.600M24.300 11.700l3.600-3.600" stroke="#fff" stroke-width="4.500"/></svg></button>
      <button class="running" aria-label="Terminal"><svg viewBox="0 0 36 36"><path fill="#a8b0b6" d="M1 4h34v28H1z"/><path fill="#d9dee2" d="M2 5h32v3H2z"/><path fill="#000" d="M3 9h30v21H3z"/><path fill="#3a3a3a" d="M3 9h30c-8 4-20 6-30 9z"/><path d="M8 11.500H5v3h3M9.500 12v.8M9.500 14v.8M11 11l2 4M14 15h4" fill="none" stroke="#ccc"/></svg></button>
      <button class="running" aria-label="Git"><svg viewBox="0 0 36 36"><path fill="#f46b66" d="M18 0l8 8-8 8-8-8z"/><path fill="#74a5f5" d="M8.500 9.500l8 8-8 9-8.500-8.500z"/><path fill="#80c34f" d="M27.500 9.500L36 18l-8.500 8.500-8-8.500z"/><path fill="#fbdc70" d="M18 19l8 9-8 8-8-8z"/><path d="M14 4l6 8v13M20 12l7 6" fill="none" stroke="#3b2a20" stroke-width="2"/><g fill="#3b2a20"><circle cx="20" cy="12" r="2.700"/><circle cx="27" cy="18" r="2.700"/><circle cx="19.500" cy="26" r="2.700"/></g></svg></button>
    </div>
    <div class="tray">
      <button aria-label="More"><svg viewBox="0 0 24 24"><path d="M3 16l9-9 9 9" fill="none" stroke="#fff" stroke-width="1.500"/></svg></button>
      <button aria-label="Cloud"><svg viewBox="0 0 24 24"><path fill="#b9b9b9" d="M4 19a5 5 0 010-9 7 7 0 0113-1l-9 10z"/><path fill="#fff" d="M2 19l9-6 6-4a5 5 0 014 10 4 4 0 01-3 1H5z"/></svg></button>
      <button aria-label="Update"><svg viewBox="0 0 24 24"><path d="M1 4l22-4v16M1 4v17l12 2" fill="none" stroke="#fff" stroke-width="1.300"/><path d="M7 12c0-5 6-6 8-3V6M15 13c0 5-6 6-8 3v3" fill="none" stroke="#fff" stroke-width="1.300"/><circle cx="18" cy="18.500" r="5.500" fill="#ff9200"/></svg></button>
      <button aria-label="Battery"><svg viewBox="0 0 24 24"><path d="M2 3v4M6 3v4M0 7.500h8v3c0 3-8 3-8 0zM4 13v5h2" fill="none" stroke="#fff" stroke-width="1.300"/><path d="M8 6.500h13.500v12H6v-4" fill="none" stroke="#fff"/><path fill="#fff" d="M8 8h12v9H8zM22 10h2v5h-2z"/></svg></button>
      <button aria-label="Network"><svg viewBox="0 0 24 24"><path d="M8 4.500h15.500v13H3V11M8 21.500h9M12.500 18v3M.5 3.500h6v6h-6zM2 5.500h3v2H2zM3 10v2" fill="none" stroke="#fff" stroke-width="1.300"/></svg></button>
      <button aria-label="Volume"><svg viewBox="0 0 24 24"><path d="M1.500 8.500h3l5-5v17l-5-5h-3z" fill="none" stroke="#fff" stroke-width="1.300"/><path d="M12 9c2 2 2 4 0 6M15.500 6c4 4 4 8 0 12" fill="none" stroke="#ddd" stroke-width="1.300"/><path d="M18.500 3.500c5 5 5 12 0 17" fill="none" stroke="#888" stroke-width="1.300"/></svg></button>
      <button aria-label="Input off"><svg viewBox="0 0 24 24"><circle cx="12" cy="12" r="11" fill="#a0a0a0"/><path d="M7 7l10 10M17 7L7 17" stroke="#222" stroke-width="3"/></svg></button>
    </div>
    <button class="clock"><span>3:20</span><span>2021/02/14</span></button>
    <button class="action-center" aria-label="Notifications"><svg viewBox="0 0 24 24"><path fill="#fff" d="M0 0h24v19H12l-2 5-4-5H0z"/><path d="M5 5.500h14M5 9.500h14M5 13.500h9" stroke="#333" stroke-width="1.300"/></svg><span>2</span></button>
    <span class="peek"></span>
  </div>

</body>
</html>
```

FILE: styles.css
```css
* { margin: 0; padding: 0; box-sizing: border-box; }
body {
  height: 100vh; display: flex; flex-direction: column; overflow: hidden;
  font-family: "Open Sans", "Noto Sans CJK JP", sans-serif; font-size: 20px;
  line-height: 30px; color: #24292e; background: #fff;
}
button { font: inherit; color: inherit; background: none; border: none; cursor: pointer; }
input { font: inherit; color: inherit; background: none; border: none; outline: none; min-width: 0; }
a { color: inherit; text-decoration: none; }
svg { display: block; flex: none; fill: currentColor; fill-rule: evenodd; }
strong { font-weight: 600; }
.sprite { position: absolute; width: 0; height: 0; }
.icon { width: 24px; height: 24px; }
.caret {
  width: 0; height: 0; border: 6px solid transparent;
  border-top-color: currentColor; border-bottom: 0;
}

/* BROWSER TABS */
.tab-strip { display: flex; height: 51px; padding-left: 15px; background: #dee1e8; }
.tabs { flex: 1; display: flex; min-width: 0; }
.tab {
  flex: 1 1 0; min-width: 0; display: flex; align-items: center; gap: 12px;
  padding: 0 8px 0 11px; font-size: 17px; color: #45494e; text-align: left;
  background: linear-gradient(#84878c, #84878c) right center / 2px 30px no-repeat;
}
.tab svg { width: 24px; height: 24px; }
.tab span {
  flex: 1; overflow: hidden; white-space: nowrap;
  mask-image: linear-gradient(to right, #000 50%, transparent);
}
.tab.no-line { background: none; }
.tab.active {
  position: relative; gap: 20px; background: #fff;
  border-radius: 12px 12px 0 0;
}
.tab.active::before, .tab.active::after {
  content: ""; position: absolute; bottom: 0; width: 12px; height: 12px;
}
.tab.active::before { right: 100%; background: radial-gradient(circle at 0 0, transparent 12px, #fff 12px); }
.tab.active::after { left: 100%; background: radial-gradient(circle at 100% 0, transparent 12px, #fff 12px); }
.tab .dark { color: #24292e; }
.tab .tab-close { width: 20px; height: 20px; color: #3c4043; }
.new-tab { width: 66px; display: grid; place-items: center; }
.new-tab svg { width: 18px; height: 18px; }
.window-buttons { display: flex; margin-left: 62px; }
.window-buttons button { width: 69px; height: 42px; display: grid; place-items: center; }
.window-buttons svg { width: 16px; height: 16px; }

/* ADDRESS BAR */
.toolbar { display: flex; align-items: center; height: 54px; padding: 0 9px; }
.tool { width: 48px; display: grid; place-items: center; }
.toolbar svg { width: 24px; height: 24px; }
.omnibox {
  flex: 1; display: flex; align-items: center; gap: 24px; height: 42px;
  margin-left: 9px; padding: 0 15px 0 20px; border-radius: 21px; background: #f1f3f4;
}
.omnibox .lock { width: 14px; height: 18px; }
.url {
  flex: 1; margin-left: -6px; -webkit-text-fill-color: transparent;
  background: linear-gradient(to right, #202124 105px, #5f6368 105px);
  -webkit-background-clip: text; background-clip: text;
}
.extensions { display: flex; align-items: center; padding-left: 9px; }
.extensions button { width: 48px; height: 42px; display: grid; place-items: center; }
.extensions .picker { padding-left: 8px; align-items: end; }
.picker svg { width: 32px; height: 34px; }
.extensions .font-ext { font-family: "Liberation Serif", serif; font-size: 27px; color: #111; }
.extensions .profile {
  width: 34px; height: 34px; margin: 0 7px; border-radius: 50%;
  background: #ab47bc; color: #fff; font-size: 14px; line-height: 20px;
}

/* BOOKMARKS */
.bookmarks {
  display: flex; gap: 20px; height: 49px; padding: 0 23px;
  font-size: 17px; color: #3c4043; border-bottom: 1px solid #d5d7da;
}
.bookmarks a { display: flex; align-items: center; gap: 12px; height: 44px; }
.bookmarks .apps-link { gap: 14px; font-size: 15px; }
.bookmarks svg { width: 20px; height: 20px; }
.bookmarks .camera { width: 24px; }

/* PAGE */
.viewport { flex: 1; display: flex; min-height: 0; }
.page { flex: 1; min-width: 0; overflow: hidden; }
.scrollbar {
  width: 25px; display: flex; flex-direction: column; align-items: center;
  background: #f1f1f1;
}
.scrollbar .up, .scrollbar .down { border: 6px solid transparent; }
.scrollbar .up { margin: 5px 0 6px; border-bottom-color: #a3a3a3; }
.scrollbar .down { margin-bottom: 5px; border-top-color: #505050; }
.scrollbar .thumb { width: 21px; height: 174px; margin-top: 2px; margin-bottom: auto; background: #c1c1c1; }

.gh-header {
  display: flex; align-items: center; gap: 24px; height: 93px; padding: 0 48px;
  background: #24292e; color: #fff;
}
.gh-logo { width: 48px; height: 48px; }
.gh-search {
  display: flex; align-items: center; width: 408px; height: 45px;
  padding: 0 12px 0 18px; border: 1px solid #444d56; border-radius: 9px;
}
.gh-search input { flex: 1; padding-top: 2px; }
.gh-search input::placeholder { color: #c6c8ca; }
.gh-search kbd {
  width: 29px; height: 30px; border: 1px solid #6a737d; border-radius: 5px;
  font: inherit; font-size: 16px; line-height: 28px; text-align: center; color: #8f969d;
}
.gh-header nav { display: flex; gap: 24px; font-size: 19px; font-weight: 600; }
.gh-user { display: flex; align-items: center; gap: 24px; margin-left: auto; }
.gh-user button { display: flex; align-items: center; gap: 6px; }
.gh-user .plus { width: 18px; height: 18px; margin-right: 4px; }
.gh-user .avatar { width: 30px; height: 30px; border-radius: 50%; }
.notify { position: relative; }
.notify .dot {
  position: absolute; top: -10px; right: -3px; width: 17px; height: 17px;
  border: 1px solid #24292e; border-radius: 50%;
  background: linear-gradient(#54a3ff, #006eed);
}

/* REPO HEADER */
.repo-head { padding: 25px 48px 0; background: #fafbfc; border-bottom: 1px solid #e1e4e8; }
.repo-top { display: flex; justify-content: space-between; align-items: flex-start; height: 108px; }
.repo-top h1 { display: flex; align-items: center; gap: 6px; font-size: 29px; line-height: 45px; font-weight: 400; color: #586069; }
.repo-top h1 .icon { margin-right: 5px; }
.repo-top a { color: #0366d6; }
.repo-top p { font-size: 17px; line-height: 32px; }
.repo-actions { display: flex; gap: 15px; margin-top: 2px; }
.count-btn {
  display: flex; height: 42px; border: 1px solid #d9dbde; border-radius: 9px;
  background: #fafbfc; font-size: 17px; font-weight: 600; overflow: hidden;
  box-shadow: 0 1px 0 rgba(27,31,35,0.04);
}
.count-btn button { display: flex; align-items: center; gap: 5px; padding: 0 18px; }
.count-btn .icon { color: #6a737d; }
.count-btn .caret { margin-left: 5px; color: #4d5257; }
.count-btn .spaced { gap: 11px; }
.count-btn .muted { color: #6a737d; }
.count-btn a {
  min-width: 46px; padding: 0 18px; border-left: 1px solid #d9dbde;
  background: #fff; line-height: 40px; color: #24292e;
}
.repo-nav { display: flex; }
.repo-nav a { display: flex; align-items: center; gap: 10px; height: 62px; padding: 0 24px 7px; border-bottom: 3px solid transparent; }
.repo-nav .icon { color: #959da5; }
.repo-nav .selected { font-weight: 600; border-bottom-color: #f9826c; }
.repo-nav .selected .icon { color: #24292e; }

/* REPO BODY */
.repo-body { display: grid; grid-template-columns: minmax(0, 1fr) 414px; gap: 48px; padding: 48px; }
.btn {
  display: flex; align-items: center; height: 48px; padding: 2px 24px 0;
  border: 1px solid #d9dbde; border-radius: 9px; background: #fafbfc;
  font-weight: 600; box-shadow: 0 1px 0 rgba(27,31,35,0.04);
}
.btn .caret { margin-left: 11px; color: #4d5257; }
.btn .raised { margin: 0 0 4px 6px; }
.btn .icon { margin-right: 12px; color: #586069; }
.btn.primary { background: #2ea44f; border-color: #2b9a4a; color: #fff; }
.btn.primary .icon, .btn.primary .caret { color: #d5eedc; }
.file-nav { display: flex; align-items: center; gap: 24px; margin-bottom: 24px; color: #586069; }
.file-nav > a { display: flex; align-items: center; gap: 4px; }
.file-nav strong { color: #24292e; }
.branch-btn { color: #24292e; }
.file-buttons { display: flex; gap: 12px; margin-left: auto; color: #24292e; }
.file-buttons .btn { padding: 2px 25px 0; }

.files { border: 1px solid #e1e4e8; border-radius: 9px; }
.last-commit {
  display: flex; align-items: center; height: 83px; margin: -1px -1px 0;
  padding: 0 24px 0 20px; border: 1px solid #c8e1ff; border-bottom-color: #dde6ee;
  border-radius: 9px 9px 0 0; background: #f1f8ff;
}
.commit-avatar { width: 36px; height: 36px; margin-right: 16px; border-radius: 50%; }
.last-commit .sha {
  margin-left: auto; font-family: "Liberation Mono", monospace;
  font-size: 16px; color: #586069;
}
.last-commit .when { margin: 0 24px 0 14px; color: #586069; }
.last-commit .commits { display: flex; align-items: center; gap: 6px; color: #586069; }
.last-commit .commits strong { color: #24292e; }
.files table { width: 100%; table-layout: fixed; border-collapse: collapse; }
.files td { height: 55px; padding-top: 2px; border-top: 1px solid #eaecef; color: #6a737d; }
.files tr:first-child td { border-top: none; }
.files td:first-child { padding-left: 25px; }
.files td:last-child { padding-right: 24px; text-align: right; }
.files td a { color: #24292e; }
.files td a span { color: #6a737d; }
.files .folder { color: #79b8ff; }
.c-icon { width: 72px; }
.c-name { width: 384px; }
.c-age { width: 180px; }

/* SIDEBAR */
aside { padding-top: 1px; color: #586069; }
aside h2 { font-size: 23px; line-height: 36px; font-weight: 600; color: #24292e; }
.about { padding-bottom: 35px; border-bottom: 1px solid #e8eaed; }
.about-head { display: flex; justify-content: space-between; align-items: center; margin-bottom: 24px; }
.about p { margin-bottom: 25px; font-size: 23px; line-height: 36px; }
.about a { display: flex; align-items: center; gap: 18px; height: 30px; margin-bottom: 25px; }
.about a:last-child { margin-bottom: 0; }
.releases { padding-top: 38px; font-size: 17px; line-height: 27px; }
.releases h2 { margin-bottom: 22px; }
.releases a { color: #3c66d2; }

/* DOWNLOAD SHELF */
.shelf {
  display: flex; align-items: center; height: 84px; padding-right: 16px;
  border-top: 1px solid #d5d9dd;
}
.download-item {
  display: flex; align-items: center; width: 356px; height: 66px; padding: 0 27px 0 33px;
  font-size: 18px; color: #3c4043; border-right: 2px solid #c9c9c9;
}
.zip { width: 18px; height: 24px; margin-right: 23px; }
.chev { width: 15px; height: 9px; margin-left: auto; }
.show-all {
  margin-left: auto; height: 48px; padding: 0 24px; border: 1px solid #dadce0;
  border-radius: 6px; font-size: 16px; font-weight: 500; color: #3067e0;
}
.shelf-close { margin-left: 16px; color: #5f6368; }
.shelf-close svg { width: 22px; height: 22px; }

/* TASKBAR */
.taskbar {
  display: flex; height: 60px; color: #fff;
  background: linear-gradient(to left, #333a50, #454545 80px);
}
.taskbar button { display: grid; place-items: center; }
.start { width: 72px; background: linear-gradient(to right, #263a40, #2f443e); }
.taskbar svg { width: 24px; height: 24px; }
.task-search {
  display: flex; align-items: center; gap: 18px; width: 516px; padding: 0 16px;
  background: #f2f2f2; border: 2px solid #bcbcbc;
}
.task-search input { flex: 1; padding-top: 2px; font-size: 19px; color: #222; }
.task-search input::placeholder { color: #333; }
.task-btn { width: 72px; }
.apps { flex: 1; display: flex; padding: 0 4px 0 3px; }
.apps button { flex: 1; }
.taskbar .apps svg { width: 36px; height: 36px; }
.apps .running { background: linear-gradient(#76b9ed, #76b9ed) center bottom / 48px 3px no-repeat; }
.apps .split { background-image: linear-gradient(to right, #76b9ed 34px, #5b8bb0 34px); }
.apps .current {
  background:
    linear-gradient(#76b9ed, #76b9ed) center bottom / 100% 3px no-repeat,
    linear-gradient(to left, #565656 6px, #3a3a3a 6px, #3a3a3a 8px, #6a6a6a 8px);
}
.tray { display: flex; }
.tray button { width: 36px; }
.clock { width: 109px; align-content: center; font-size: 17px; line-height: 27px; }
.action-center { position: relative; width: 73px; padding-right: 12px; }
.action-center span {
  position: absolute; left: 32px; top: 29px; width: 24px; height: 24px;
  border: 1px solid #8b8f98; border-radius: 50%; background: #333740;
  font-size: 17px; line-height: 22px;
}
.peek { width: 9px; border-left: 1px solid #8b8f98; }
```
